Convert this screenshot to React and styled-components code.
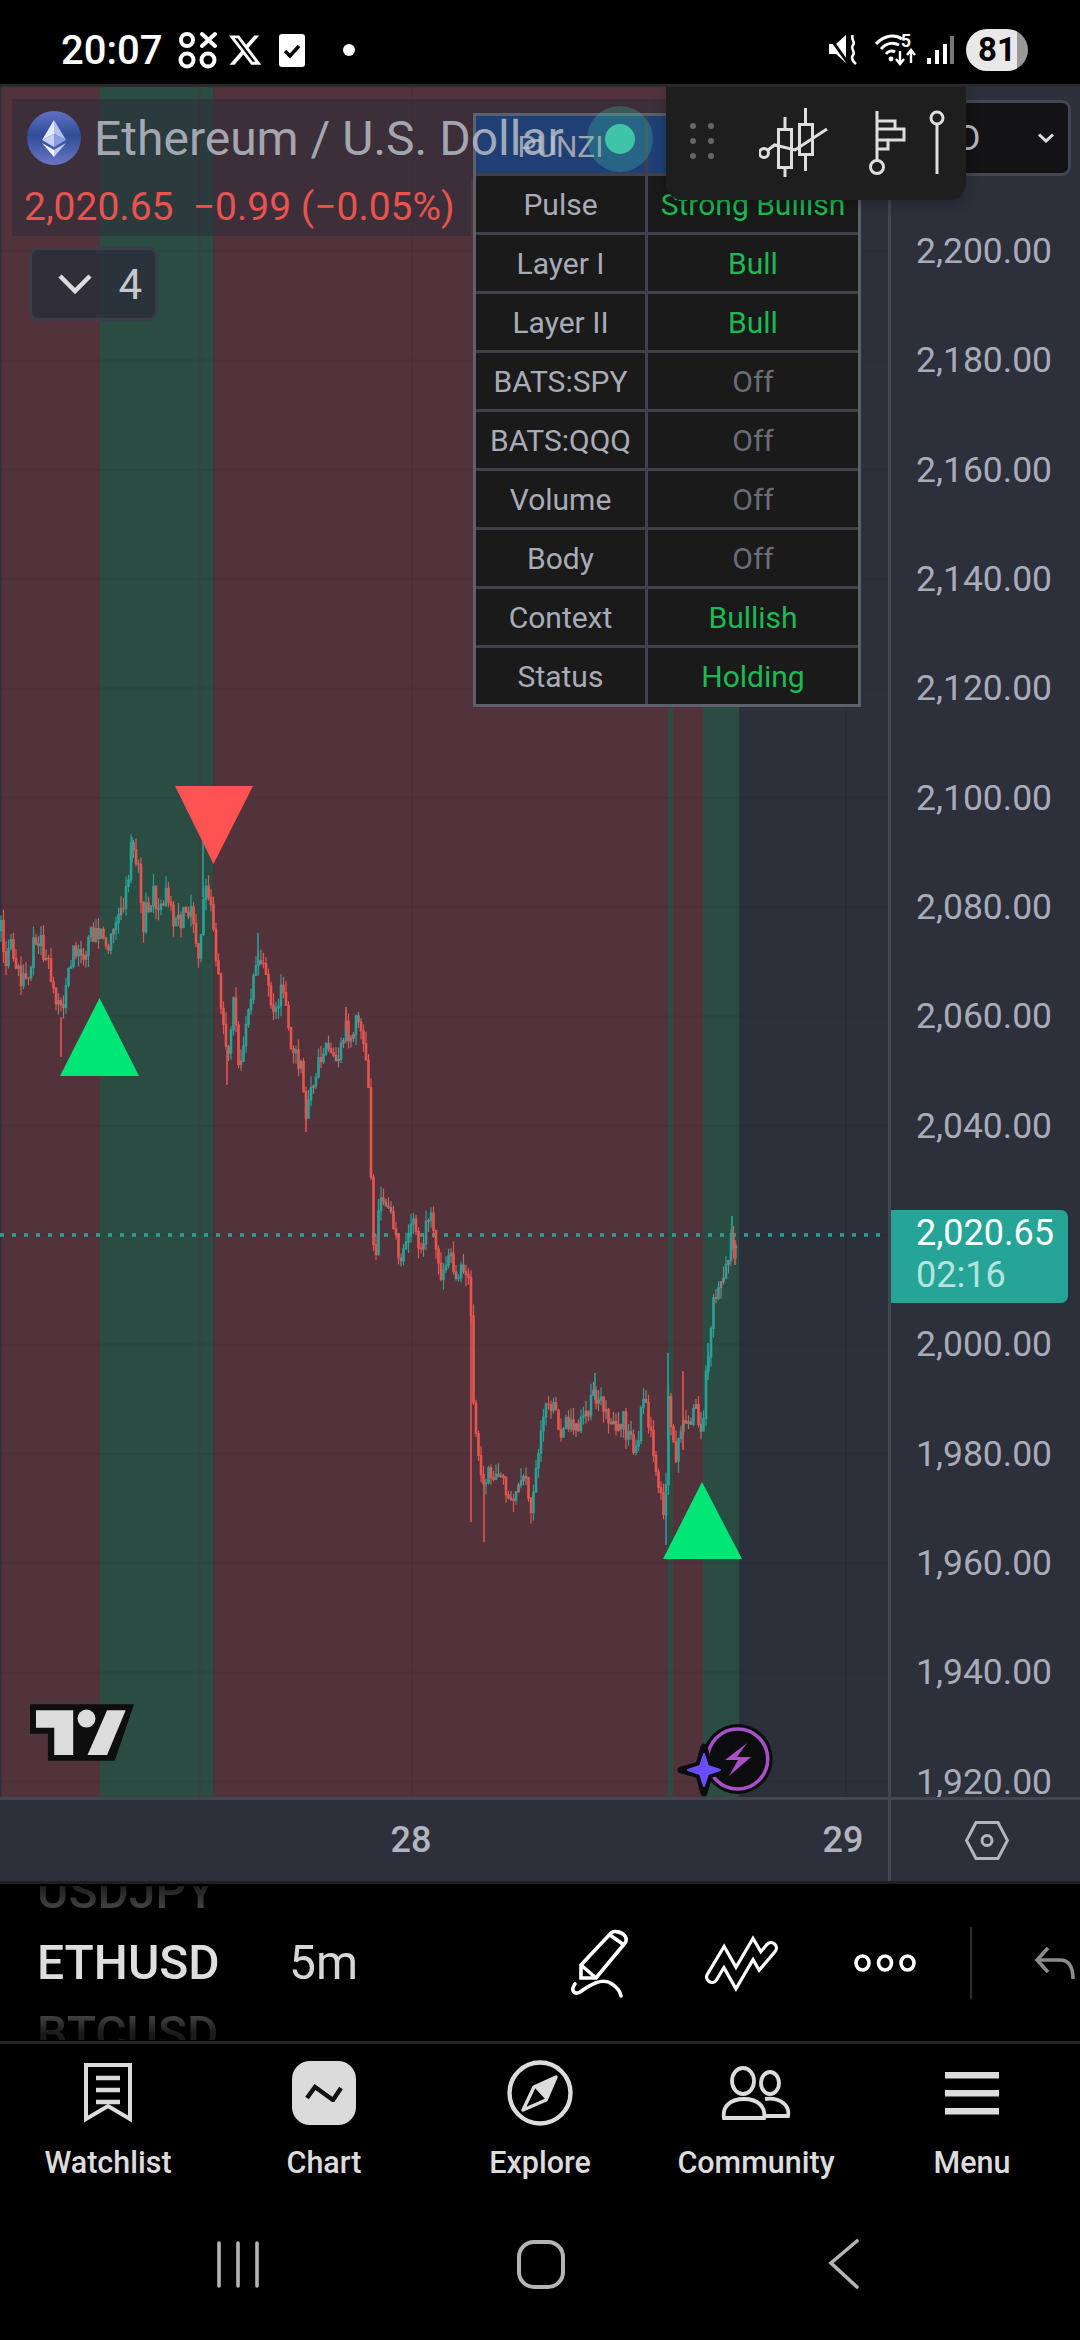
import styled, { createGlobalStyle } from "styled-components";
import { FaXTwitter } from "react-icons/fa6";

const GlobalStyle = createGlobalStyle`
  html, body {
    margin: 0;
    padding: 0;
    background: #000;
  }
  * {
    box-sizing: border-box;
  }
  #root {
    width: 1080px;
    height: 2340px;
    overflow: hidden;
    font-family: Roboto, "Liberation Sans", sans-serif;
  }
`;

const PLOT_TOP = 87;
const PLOT_W = 888;
const PLOT_H = 1710;

const PRICES = [
  "2,200.00", "2,180.00", "2,160.00", "2,140.00", "2,120.00",
  "2,100.00", "2,080.00", "2,060.00", "2,040.00", "2,020.00",
  "2,000.00", "1,980.00", "1,960.00", "1,940.00", "1,920.00",
];

const TABLE_ROWS = [
  ["Pulse", "Strong Bullish", "on"],
  ["Layer I", "Bull", "on"],
  ["Layer II", "Bull", "on"],
  ["BATS:SPY", "Off", "off"],
  ["BATS:QQQ", "Off", "off"],
  ["Volume", "Off", "off"],
  ["Body", "Off", "off"],
  ["Context", "Bullish", "on"],
  ["Status", "Holding", "on"],
];

// traced off the chart: [x, y] in page pixels
const TRACE = [
  [0, 930], [2, 932], [5, 957], [12, 947], [21, 983], [28, 983], [34, 930], [41, 940], [52, 980],
  [60, 1017], [65, 993], [69, 967], [77, 947], [83, 960], [90, 937], [100, 927], [110, 947],
  [119, 920], [126, 890], [132, 843], [138, 863], [143, 923], [153, 890], [160, 910], [165, 887],
  [176, 927], [188, 903], [199, 950], [203, 897], [207, 887], [217, 957], [226, 1047], [227, 1070],
  [234, 987], [239, 1063], [248, 1020], [258, 950], [269, 993], [275, 1020], [284, 983], [289, 1040],
  [300, 1063], [306, 1113], [317, 1067], [332, 1043], [339, 1057], [346, 1020], [350, 1043],
  [356, 1020], [365, 1047], [369, 1093], [372, 1233], [375, 1267], [378, 1210], [385, 1200],
  [393, 1227], [402, 1263], [412, 1223], [420, 1243], [430, 1213], [437, 1247], [440, 1273],
  [447, 1253], [458, 1277], [468, 1267], [471, 1307], [472, 1390], [475, 1433], [483, 1487],
  [495, 1467], [510, 1497], [525, 1483], [532, 1513], [535, 1463], [548, 1393], [562, 1433],
  [570, 1417], [577, 1433], [595, 1390], [607, 1420], [623, 1420], [635, 1457], [642, 1407],
  [647, 1413], [657, 1477], [665, 1510], [668, 1403], [677, 1460], [683, 1407], [688, 1430],
  [696, 1413], [702, 1443], [705, 1383], [708, 1363], [715, 1293], [723, 1283], [728, 1260],
  [732, 1237], [735, 1250], [737, 1240],
];

const TEAL = "#2ba196";
const RED = "#e8544f";
const GREY = "#8f7f7b";

const SPIKES = [
  [61, 1017, 1057, RED], [203, 832, 897, TEAL], [132, 837, 862, TEAL], [227, 1050, 1085, RED],
  [306, 1100, 1132, RED], [346, 1007, 1030, RED], [258, 933, 960, TEAL], [371, 1090, 1173, RED],
  [471, 1307, 1522, RED], [484, 1480, 1542, RED], [666, 1500, 1545, TEAL], [668, 1353, 1440, TEAL],
  [683, 1371, 1450, RED], [708, 1343, 1380, TEAL], [732, 1216, 1250, TEAL], [595, 1373, 1400, TEAL],
  [735, 1240, 1265, RED],
];

function priceAt(x) {
  for (let i = 1; i < TRACE.length; i++) {
    const [x0, y0] = TRACE[i - 1];
    const [x1, y1] = TRACE[i];
    if (x <= x1) return y0 + ((y1 - y0) * (x - x0)) / (x1 - x0);
  }
  return TRACE[TRACE.length - 1][1];
}

function buildCandles() {
  let seed = 41;
  const rand = () => {
    seed = (seed * 16807) % 2147483647;
    return seed / 2147483647;
  };
  const list = [];
  let open = priceAt(0);
  for (let x = 1; x < 738; x += 2.5) {
    const close = priceAt(x) + (rand() - 0.5) * 22;
    const small = Math.abs(close - open) < 7 && rand() < 0.45;
    const color = small ? GREY : close > open ? RED : TEAL;
    const top = Math.min(open, close);
    const bottom = Math.max(open, close);
    list.push({
      x,
      color,
      top,
      bottom: bottom + 1,
      high: top - rand() * 12,
      low: bottom + rand() * 12,
    });
    open = close;
  }
  return list;
}

const CANDLES = buildCandles();

function ChartDrawing() {
  const priceLines = PRICES.map((_, i) => 251 + i * 109.33);
  return (
    <PlotSvg viewBox={`0 ${PLOT_TOP} ${PLOT_W} ${PLOT_H}`}>
      <rect x="0" y={PLOT_TOP} width="100" height={PLOT_H} fill="#52333b" />
      <rect x="100" y={PLOT_TOP} width="113.5" height={PLOT_H} fill="#2a4c42" />
      <rect x="213.5" y={PLOT_TOP} width="454.5" height={PLOT_H} fill="#52333b" />
      <rect x="668" y={PLOT_TOP} width="5" height={PLOT_H} fill="#2a4c42" />
      <rect x="673" y={PLOT_TOP} width="30" height={PLOT_H} fill="#52333b" />
      <rect x="703" y={PLOT_TOP} width="36" height={PLOT_H} fill="#2a4c42" />
      <rect x="0" y={PLOT_TOP} width="1.5" height={PLOT_H} fill="#2b303b" />

      {priceLines.map((y) => (
        <line key={y} x1="0" x2={PLOT_W} y1={y} y2={y} stroke="#000" strokeOpacity="0.04" strokeWidth="2" />
      ))}
      <line x1="199.5" x2="199.5" y1={PLOT_TOP} y2={PLOT_TOP + PLOT_H} stroke="#52333b" strokeOpacity="0.6" strokeWidth="2" />
      {[412, 846].map((x) => (
        <line key={x} x1={x} x2={x} y1={PLOT_TOP} y2={PLOT_TOP + PLOT_H} stroke="#000" strokeOpacity="0.05" strokeWidth="2" />
      ))}

      <line x1="0" x2={PLOT_W} y1="1235" y2="1235" stroke={TEAL} strokeWidth="3.5" strokeDasharray="4 8" />

      {CANDLES.map((c) => (
        <g key={c.x} stroke={c.color}>
          <line x1={c.x} x2={c.x} y1={c.high} y2={c.low} strokeWidth="1.2" />
          <line x1={c.x} x2={c.x} y1={c.top} y2={c.bottom} strokeWidth="2.6" />
        </g>
      ))}
      {SPIKES.map(([x, y1, y2, c]) => (
        <line key={`${x}-${y1}`} x1={x} x2={x} y1={y1} y2={y2} stroke={c} strokeWidth="1.6" />
      ))}

      <polygon points="175,786 253,786 213.5,864" fill="#ff5252" />
      <polygon points="60,1076 139,1076 99.5,998" fill="#00e676" />
      <polygon points="663,1559 742,1559 702,1482" fill="#00e676" />

      <circle cx="737.7" cy="1759" r="35" fill="#0d0d0f" />
      <circle cx="737.7" cy="1759" r="30" fill="none" stroke="#a850c9" strokeWidth="3.5" />
      <polygon points="747,1743 725,1760 738,1760 729,1776 751,1757 737,1757" fill="#a850c9" />
      <path d="M704 1747 L709 1765 L727 1770 L709 1775 L704 1793 L699 1775 L681 1770 L699 1765 Z" fill="#0d0d0f" stroke="#0d0d0f" strokeWidth="7" strokeLinejoin="round" />
      <path d="M704 1754 L708 1766 L720 1770 L708 1774 L704 1786 L700 1774 L688 1770 L700 1766 Z" fill="#6a4dff" stroke="#6a4dff" strokeWidth="2" strokeLinejoin="round" />
    </PlotSvg>
  );
}

function EthIcon() {
  return (
    <svg width="54" height="54" viewBox="0 0 54 54">
      <defs>
        <linearGradient id="ethBg" x1="0" y1="0" x2="0" y2="1">
          <stop offset="0" stopColor="#6071c4" />
          <stop offset="0.45" stopColor="#2f4d96" />
          <stop offset="1" stopColor="#6a76c6" />
        </linearGradient>
      </defs>
      <circle cx="27" cy="27" r="27" fill="url(#ethBg)" />
      <polygon points="27,9 15,29 27,23" fill="#e3e8fa" />
      <polygon points="27,9 39,29 27,23" fill="#b3c0ee" />
      <polygon points="15,29 27,23 27,36" fill="#c4cff2" />
      <polygon points="39,29 27,23 27,36" fill="#8b9de2" />
      <polygon points="15,32 27,39 27,46" fill="#f2f4fd" />
      <polygon points="39,32 27,39 27,46" fill="#c4cff2" />
    </svg>
  );
}

function TvLogo() {
  return (
    <LogoSvg viewBox="30 42 313 170">
      <polygon points="30,42 343,42 285,212 84,212 84,131 30,131" fill="#0e0e0e" />
      <polygon points="48,60 160,60 160,195 103,195 103,113 48,113" fill="#dcdcdc" />
      <circle cx="200" cy="85" r="27" fill="#dcdcdc" />
      <polygon points="262,60 318,60 262,195 203,195" fill="#dcdcdc" />
    </LogoSvg>
  );
}

function App() {
  return (
    <Screen>
      <GlobalStyle />
      <StatusBar>
        <StatusLeft>
          <Clock>20:07</Clock>
          <svg width="39" height="38" viewBox="0 0 39 38" fill="none" stroke="#fff" strokeWidth="4">
            <circle cx="9" cy="9" r="6" />
            <path d="M24 3 L37 15 M37 3 L24 15" strokeLinecap="round" />
            <circle cx="9" cy="29" r="6.5" />
            <circle cx="30" cy="29" r="6.5" />
          </svg>
          <XLogoSlot>
            <FaXTwitter size={36} color="#fff" />
          </XLogoSlot>
          <svg width="26" height="33" viewBox="0 0 26 33">
            <rect width="26" height="33" rx="3" fill="#fff" />
            <path d="M6 17 L11 22 L20 12" fill="none" stroke="#000" strokeWidth="3.5" />
          </svg>
          <NoticeDot />
        </StatusLeft>
        <StatusRight>
          <svg width="30" height="30" viewBox="0 0 30 30">
            <polygon points="1,9 8,9 18,0 18,28 8,19 1,19" fill="#fff" />
            <path d="M0 0 L20 28" stroke="#000" strokeWidth="3" />
            <path d="M25 0 C22 4 28 7 25 10 C22 14 28 17 25 20 C22 24 26 27 28 29" fill="none" stroke="#fff" strokeWidth="2.6" />
          </svg>
          <WifiSlot>
            <svg width="42" height="32" viewBox="0 0 42 32" fill="none" stroke="#fff" strokeWidth="3">
              <path d="M1 10 C9 1 20 0 27 5" />
              <path d="M6 15 C11 9 18 8 24 11" />
              <path d="M11 20 C13 17 17 16 20 18" />
              <circle cx="16" cy="25" r="2.4" fill="#fff" stroke="none" />
              <text x="31" y="13" fill="#fff" stroke="none" fontSize="18" fontWeight="700" fontFamily="Roboto" textAnchor="middle">5</text>
              <path d="M25 17 V29 M21 25 L25 30 L29 25 M36 29 V17 M32 21 L36 16 L40 21" strokeWidth="2.4" />
            </svg>
          </WifiSlot>
          <SignalSlot>
            <svg width="27" height="28" viewBox="0 0 27 28" fill="#fff">
              <rect x="0" y="22" width="4" height="6" />
              <rect x="8" y="14" width="4" height="14" />
              <rect x="16" y="8" width="4" height="20" />
              <rect x="23" y="0" width="4" height="28" fill="#777" />
            </svg>
          </SignalSlot>
          <Battery>81</Battery>
        </StatusRight>
      </StatusBar>

      <ChartRow>
        <Plot>
          <ChartDrawing />
          <LegendShade>
            <ShadeTop />
            <ShadeBottom />
          </LegendShade>
          <Legend>
            <LegendTitle>
              <EthIcon />
              <span>Ethereum / U.S. Dollar</span>
            </LegendTitle>
            <LegendPrice>2,020.65&nbsp;&nbsp;−0.99 (−0.05%)</LegendPrice>
          </Legend>
          <CollapseButton>
            <svg width="36" height="22" viewBox="0 0 36 22" fill="none" stroke="#dcdcdc" strokeWidth="4.5">
              <path d="M3 3 L18 18 L33 3" />
            </svg>
            <span>4</span>
          </CollapseButton>
          <SignalTable>
            <HeaderCell>PUNZI</HeaderCell>
            <HeaderCell />
            {TABLE_ROWS.map(([label, value, state]) => (
              <Row key={label}>
                <LabelCell>{label}</LabelCell>
                <ValueCell $state={state}>{value}</ValueCell>
              </Row>
            ))}
            <LiveDot />
          </SignalTable>
          <TvLogoSlot>
            <TvLogo />
          </TvLogoSlot>
        </Plot>

        <PriceAxis>
          <CurrencyPicker>
            <span>USD</span>
            <svg width="16" height="10" viewBox="0 0 16 10" fill="none" stroke="#dcdcdc" strokeWidth="3">
              <path d="M1 1.5 L8 8 L15 1.5" />
            </svg>
          </CurrencyPicker>
          <PriceList>
            {PRICES.map((p) => (
              <PriceLabel key={p}>{p}</PriceLabel>
            ))}
          </PriceList>
          <PriceTag>
            <strong>2,020.65</strong>
            <span>02:16</span>
          </PriceTag>
        </PriceAxis>

        <DrawingBar>
          <DragDots>
            {[0, 1, 2, 3, 4, 5].map((i) => (
              <i key={i} />
            ))}
          </DragDots>
          <svg width="198" height="70" viewBox="759 107 198 70" fill="none" stroke="#dedede" strokeWidth="3">
            <circle cx="764" cy="153" r="4.5" />
            <path d="M768 150 L774.5 145 L795 150 L827 129" />
            <rect x="778.5" y="129.5" width="13" height="38" />
            <path d="M785 117 V129 M785 168 V177" />
            <rect x="799.5" y="124.5" width="13" height="30" />
            <path d="M805.5 108 V124 M805.5 155 V171" />
            <path d="M877 111 V160" />
            <circle cx="877" cy="167" r="6.5" />
            <path d="M877 121 H895 V129 H904 V140 H888 V149 H877 M877 129 H895 M877 140 H888" />
            <circle cx="937" cy="118" r="6" />
            <path d="M937 124 V174" />
          </svg>
        </DrawingBar>
      </ChartRow>

      <TimeRow>
        <TimeAxis>
          <TimeLabel $x={411}>28</TimeLabel>
          <TimeLabel $x={843}>29</TimeLabel>
        </TimeAxis>
        <AxisCorner>
          <svg width="44" height="39" viewBox="0 0 44 39" fill="none" stroke="#b2b5be" strokeWidth="3">
            <polygon points="11,1.5 33,1.5 42.5,19.5 33,37.5 11,37.5 1.5,19.5" />
            <circle cx="22" cy="19.5" r="5" />
          </svg>
        </AxisCorner>
      </TimeRow>

      <Toolbar>
        <Wheel $width={252}>
          <WheelItem>USDJPY</WheelItem>
          <WheelItem $active>ETHUSD</WheelItem>
          <WheelItem>BTCUSD</WheelItem>
        </Wheel>
        <Wheel $width={283}>
          <WheelItem $plain>&nbsp;</WheelItem>
          <WheelItem $plain>5m</WheelItem>
          <WheelItem $plain>&nbsp;</WheelItem>
        </Wheel>
        <ToolSlot>
          <svg width="55" height="66" viewBox="0 0 55 66" fill="none" stroke="#fff" strokeWidth="3.6">
            <path d="M9 48 V35 L39 3 C42 0 50 2 53 6 C55 9 54 12 53 13 L24 48 Z" />
            <path d="M9 35 L24 48 M38 5 L52 15" />
            <path d="M3 54 C-2 61 3 65 8 62 C18 55 30 47 40 54 C46 58 48 61 49 66" strokeLinecap="round" />
          </svg>
        </ToolSlot>
        <ToolSlot $gap={79}>
          <svg width="70" height="41" viewBox="0 0 70 41" fill="none" strokeLinejoin="miter" strokeMiterlimit="3" strokeLinecap="round">
            <path d="M6 35 L18 15 L30 36 L47 7 L54 19 L65 6" stroke="#fff" strokeWidth="14" />
            <path d="M6 35 L18 15 L30 36 L47 7 L54 19 L65 6" stroke="#000" strokeWidth="7.5" />
          </svg>
        </ToolSlot>
        <ToolSlot $gap={78}>
          <svg width="62" height="18" viewBox="0 0 62 18" fill="none" stroke="#fff" strokeWidth="3.6">
            <ellipse cx="8.5" cy="9" rx="6.5" ry="7" />
            <ellipse cx="31" cy="9" rx="6.5" ry="7" />
            <ellipse cx="53.5" cy="9" rx="6.5" ry="7" />
          </svg>
        </ToolSlot>
        <ToolSeparator />
        <ToolSlot $gap={63}>
          <svg width="45" height="32" viewBox="0 0 45 32" fill="none" stroke="#8c8c8c" strokeWidth="3.6">
            <path d="M13 1 L2 13 L13 25 M2 13 H25 C34 13 38 20 38 32" />
          </svg>
        </ToolSlot>
      </Toolbar>

      <TabBar>
        <Tab>
          <TabIcon>
            <svg width="48" height="60" viewBox="0 0 48 60" fill="none" stroke="#dcdcdc" strokeWidth="4">
              <path d="M2 2 H46 V56 L24 43 L2 56 Z" />
              <path d="M12 15 H36 M12 27 H36 M12 39 H36" strokeWidth="4.5" />
            </svg>
          </TabIcon>
          <TabLabel>Watchlist</TabLabel>
        </Tab>
        <Tab>
          <TabIcon>
            <ChartTile>
              <svg width="38" height="18" viewBox="0 0 38 18" fill="none" stroke="#111" strokeWidth="4.4">
                <path d="M2 14 L10 3 L28 16 L36 4" />
              </svg>
            </ChartTile>
          </TabIcon>
          <TabLabel>Chart</TabLabel>
        </Tab>
        <Tab>
          <TabIcon>
            <svg width="66" height="66" viewBox="0 0 66 66" fill="none" stroke="#dcdcdc" strokeWidth="4.4">
              <circle cx="33" cy="33" r="30.5" />
              <polygon points="49,17 39,40 16,50 27,27" strokeWidth="3.4" strokeLinejoin="round" />
              <polygon points="49,17 39,40 27,27" fill="#dcdcdc" stroke="none" />
            </svg>
          </TabIcon>
          <TabLabel>Explore</TabLabel>
        </Tab>
        <Tab>
          <TabIcon>
            <svg width="70" height="55" viewBox="0 0 70 55" fill="none" stroke="#dcdcdc" strokeWidth="3.8">
              <ellipse cx="22" cy="15" rx="11" ry="13" />
              <ellipse cx="49" cy="17" rx="9" ry="11" />
              <path d="M3 52 C1 40 10 33 23 33 C36 33 45 40 43 52 Z" />
              <path d="M44 33 C60 31 69 40 67 50 H45" />
            </svg>
          </TabIcon>
          <TabLabel>Community</TabLabel>
        </Tab>
        <Tab>
          <TabIcon>
            <svg width="54" height="43" viewBox="0 0 54 43" fill="#dcdcdc">
              <rect width="54" height="6.5" />
              <rect y="18" width="54" height="6.5" />
              <rect y="36" width="54" height="6.5" />
            </svg>
          </TabIcon>
          <TabLabel>Menu</TabLabel>
        </Tab>
      </TabBar>

      <NavBar>
        <svg width="44" height="47" viewBox="0 0 44 47" fill="none" stroke="#b4b4b4" strokeWidth="3.6" strokeLinecap="round">
          <path d="M3 2 V45 M22 2 V45 M41 2 V45" />
        </svg>
        <svg width="48" height="49" viewBox="0 0 48 49" fill="none" stroke="#b4b4b4" strokeWidth="4">
          <rect x="2" y="2" width="44" height="45" rx="15" />
        </svg>
        <svg width="32" height="50" viewBox="0 0 32 50" fill="none" stroke="#b4b4b4" strokeWidth="3.6" strokeLinecap="round">
          <path d="M29 2 L3 24 L29 48" />
        </svg>
      </NavBar>
    </Screen>
  );
}

export default App;

const Screen = styled.div`
  width: 1080px;
  height: 2340px;
  background: #000;
  display: flex;
  flex-direction: column;
  overflow: hidden;
`;

const StatusBar = styled.header`
  height: 87px;
  flex: none;
  padding: 16px 52px 0 61px;
  border-bottom: 3px solid #2a2a2c;
  display: flex;
  align-items: center;
  justify-content: space-between;
`;

const StatusLeft = styled.div`
  display: flex;
  align-items: center;
  gap: 16px;
`;

const StatusRight = styled.div`
  display: flex;
  align-items: center;
`;

const Clock = styled.span`
  font-size: 40px;
  font-weight: 500;
  color: #fff;
`;

const XLogoSlot = styled.span`
  display: flex;
  margin: 0 0 0 -6px;
`;

const WifiSlot = styled.span`
  display: flex;
  margin-left: 17px;
`;

const SignalSlot = styled.span`
  display: flex;
  margin-left: 10px;
`;

const NoticeDot = styled.i`
  width: 12px;
  height: 12px;
  margin-left: 22px;
  border-radius: 50%;
  background: #fff;
`;

const Battery = styled.div`
  width: 62px;
  height: 42px;
  margin-left: 12px;
  border-radius: 21px;
  background: linear-gradient(90deg, #e8e8e8 82%, #999 82%);
  color: #000;
  font-size: 33px;
  font-weight: 700;
  line-height: 42px;
  text-align: center;
`;

const ChartRow = styled.div`
  position: relative;
  height: ${PLOT_H}px;
  flex: none;
  display: flex;
  background: #2b303b;
`;

const Plot = styled.div`
  position: relative;
  width: ${PLOT_W}px;
  overflow: hidden;
`;

const PlotSvg = styled.svg`
  display: block;
  width: ${PLOT_W}px;
  height: ${PLOT_H}px;
`;

const LegendShade = styled.div`
  position: absolute;
  left: 12px;
  top: 12px;
  width: 660px;
`;

const ShadeTop = styled.div`
  height: 79px;
  background: rgba(45, 44, 57, 0.58);
`;

const ShadeBottom = styled.div`
  width: 459px;
  height: 58px;
  background: rgba(45, 44, 57, 0.58);
`;

const Legend = styled.div`
  position: absolute;
  z-index: 3;
  left: 27px;
  top: 24px;
  display: flex;
  flex-direction: column;
`;

const LegendTitle = styled.div`
  display: flex;
  align-items: center;
  gap: 13px;
  font-size: 48px;
  color: rgba(190, 193, 204, 0.82);
  white-space: nowrap;
  height: 54px;
`;

const LegendPrice = styled.div`
  margin-top: 20px;
  margin-left: -3px;
  font-size: 39px;
  line-height: 44px;
  color: #e8534f;
  white-space: nowrap;
`;

const CollapseButton = styled.div`
  position: absolute;
  left: 29px;
  top: 160px;
  width: 129px;
  height: 74px;
  padding: 0 13px 0 25px;
  border: 3px solid rgba(70, 70, 82, 0.6);
  border-radius: 9px;
  background: rgba(42, 46, 57, 0.85);
  color: #c8c8cc;
  font-size: 42px;
  display: flex;
  align-items: center;
  justify-content: space-between;
`;

const SignalTable = styled.div`
  position: absolute;
  z-index: 2;
  left: 473px;
  top: 26px;
  width: 388px;
  border: 3px solid #5d606b;
  background: #3f4049;
  display: grid;
  grid-template-columns: 169px 1fr;
  gap: 3px;
  font-size: 30px;
`;

const HeaderCell = styled.div`
  height: 57px;
  background: #1f3f75;
  color: #9ea3b0;
  display: flex;
  align-items: center;
  justify-content: center;
  padding-top: 4px;
`;

const Row = styled.div`
  display: contents;
`;

const LabelCell = styled.div`
  height: 56px;
  background: #1a1a1a;
  color: #a9acb6;
  display: flex;
  align-items: center;
  justify-content: center;
  white-space: nowrap;
`;

const ValueCell = styled(LabelCell)`
  color: ${(p) => (p.$state === "on" ? "#1db954" : "#6b6d76")};
`;

const LiveDot = styled.i`
  position: absolute;
  left: 129px;
  top: 8px;
  width: 30px;
  height: 30px;
  border-radius: 50%;
  background: #40c4a8;
  box-shadow: 0 0 0 18px rgba(64, 196, 168, 0.28);
`;

const TvLogoSlot = styled.div`
  position: absolute;
  left: 30px;
  top: 1617px;
`;

const LogoSvg = styled.svg`
  display: block;
  width: 104px;
  height: 57px;
`;

const PriceAxis = styled.div`
  position: relative;
  flex: 1;
  border-left: 3px solid #434651;
  overflow: hidden;
`;

const PriceList = styled.div`
  padding: 110px 0 0 25px;
  display: flex;
  flex-direction: column;
`;

const PriceLabel = styled.div`
  flex: none;
  height: 109.33px;
  line-height: 109px;
  font-size: 35.5px;
  color: #a9acb8;
  white-space: nowrap;
`;

const CurrencyPicker = styled.div`
  position: absolute;
  left: 4px;
  top: 13px;
  width: 176px;
  height: 76px;
  padding: 0 14px 0 16px;
  border: 3px solid #434651;
  border-radius: 9px;
  background: #131316;
  color: #b2b5be;
  font-size: 35px;
  display: flex;
  align-items: center;
  justify-content: space-between;
`;

const PriceTag = styled.div`
  position: absolute;
  left: 0;
  top: 1123px;
  width: 177px;
  height: 93px;
  padding: 2px 0 0 25px;
  border-radius: 0 7px 7px 0;
  background: #27a498;
  color: #b4e4de;
  font-size: 36px;
  line-height: 42px;
  display: flex;
  flex-direction: column;
  strong {
    font-weight: 400;
    color: #fff;
  }
`;

const DrawingBar = styled.div`
  position: absolute;
  z-index: 4;
  left: 666px;
  top: 0;
  width: 300px;
  height: 113px;
  padding: 20px 0 0 24px;
  border-radius: 0 0 16px 16px;
  background: #1e1e1e;
  box-shadow: 0 4px 12px rgba(0, 0, 0, 0.25);
  display: flex;
  gap: 45px;
  align-items: flex-start;
`;

const DragDots = styled.div`
  flex: none;
  margin-top: 16px;
  width: 24px;
  display: grid;
  grid-template-columns: 6px 6px;
  justify-content: space-between;
  row-gap: 9px;
  i {
    width: 6px;
    height: 6px;
    border-radius: 50%;
    background: #666;
  }
`;

const TimeRow = styled.div`
  height: 84px;
  flex: none;
  border-top: 3px solid #434651;
  background: #2b303b;
  display: flex;
`;

const TimeAxis = styled.div`
  position: relative;
  width: 888px;
`;

const TimeLabel = styled.span`
  position: absolute;
  left: ${(p) => p.$x}px;
  top: 0;
  transform: translateX(-50%);
  font-size: 36px;
  font-weight: 500;
  line-height: 81px;
  color: #b2b5be;
`;

const AxisCorner = styled.div`
  flex: 1;
  border-left: 3px solid #434651;
  display: flex;
  align-items: center;
  justify-content: center;
  padding-left: 2px;
`;

const Toolbar = styled.div`
  height: 160px;
  flex: none;
  padding: 0 0 0 37px;
  border-top: 3px solid #1f1f22;
  display: flex;
  align-items: center;
  overflow: hidden;
`;

const Wheel = styled.div`
  flex: none;
  width: ${(p) => p.$width}px;
  height: 154px;
  display: flex;
  flex-direction: column;
  justify-content: center;
  overflow: hidden;
  mask-image: linear-gradient(to bottom, rgba(0, 0, 0, 0.35), #000 22%, #000 78%, rgba(0, 0, 0, 0.3) 96%);
`;

const WheelItem = styled.div`
  flex: none;
  height: 71px;
  line-height: 71px;
  font-size: 48px;
  font-weight: ${(p) => (p.$plain ? 400 : 500)};
  white-space: nowrap;
  color: ${(p) => (p.$active ? "#dedede" : p.$plain ? "#d6d6d6" : "#565656")};
`;

const ToolSlot = styled.div`
  flex: none;
  margin-left: ${(p) => p.$gap || 0}px;
  display: flex;
  align-items: center;
  svg {
    display: block;
    overflow: visible;
  }
`;

const ToolSeparator = styled.i`
  flex: none;
  width: 2px;
  height: 72px;
  margin-left: 54px;
  background: #2e2e30;
`;

const TabBar = styled.nav`
  height: 159px;
  flex: none;
  padding-top: 13px;
  border-top: 3px solid #232326;
  display: grid;
  grid-template-columns: repeat(5, 216px);
  align-items: start;
`;

const Tab = styled.div`
  display: flex;
  flex-direction: column;
  align-items: center;
`;

const TabIcon = styled.div`
  height: 72px;
  display: flex;
  align-items: center;
  justify-content: center;
  svg {
    display: block;
  }
`;

const ChartTile = styled.div`
  width: 64px;
  height: 64px;
  border-radius: 18px;
  background: #dbdbdb;
  display: flex;
  align-items: center;
  justify-content: center;
`;

const TabLabel = styled.span`
  margin-top: 16px;
  font-size: 30.5px;
  font-weight: 500;
  line-height: 36px;
  color: #dcdcdc;
  white-space: nowrap;
`;

const NavBar = styled.div`
  flex: 1;
  padding: 0 0 12px 86px;
  display: grid;
  grid-template-columns: repeat(3, 303px);
  align-items: center;
  justify-items: center;
`;
